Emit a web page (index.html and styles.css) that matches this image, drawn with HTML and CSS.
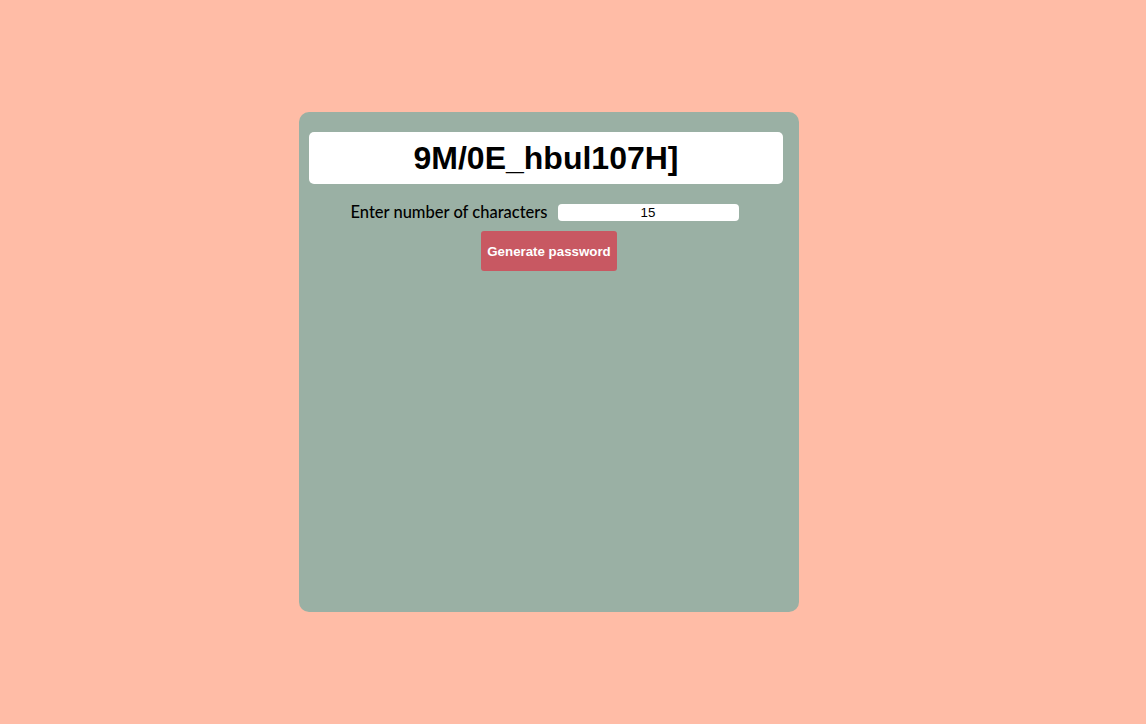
FILE: index.html
```html
<!DOCTYPE html>
<html>
<head>
<meta charset="utf-8">
<link rel="stylesheet" href="styles.css">
</head>
<body>
<div class="page">
  <div class="card">
    <div class="password">9M/0E_hbul107H]</div>
    <div class="row">
      <label class="label" for="count">Enter number of characters</label>
      <input class="count" id="count" type="text" value="15">
    </div>
    <button class="btn">Generate password</button>
  </div>
</div>
</body>
</html>
```
FILE: styles.css
```css
html, body {
  margin: 0;
  padding: 0;
  height: 100%;
}
body {
  background: #ffbca6;
  font-family: "Liberation Sans", Arial, sans-serif;
}
.page {
  display: flex;
  justify-content: flex-start;
  padding: 112px 0 0 299px;
}
.card {
  width: 500px;
  height: 500px;
  box-sizing: border-box;
  background: #9ab0a4;
  border-radius: 10px;
  padding-top: 20px;
  display: flex;
  flex-direction: column;
  align-items: center;
}
.password {
  align-self: stretch;
  margin: 0 16px 0 10px;
  height: 52px;
  background: #fff;
  border-radius: 5px;
  display: flex;
  align-items: center;
  justify-content: center;
  font-weight: bold;
  font-size: 32px;
  color: #000;
}
.row {
  margin: 18px 9px 0 0;
  display: flex;
  align-items: center;
  gap: 10px;
  height: 20px;
}
.label {
  font-family: Lato, "Noto Sans", sans-serif;
  font-weight: 500;
  font-size: 16.5px;
  color: #000;
}
.count {
  width: 181px;
  height: 17px;
  box-sizing: border-box;
  border: none;
  border-radius: 4px;
  background: #fff;
  padding: 0;
  text-align: center;
  font-family: "Liberation Sans", Arial, sans-serif;
  font-size: 13.3px;
  color: #000;
  outline: none;
}
.btn {
  margin-top: 9px;
  width: 136px;
  height: 40px;
  border: none;
  border-radius: 3px;
  background: #c85862;
  color: #fff;
  font-family: "Liberation Sans", Arial, sans-serif;
  font-weight: bold;
  font-size: 13.3px;
  padding: 0;
}
```
